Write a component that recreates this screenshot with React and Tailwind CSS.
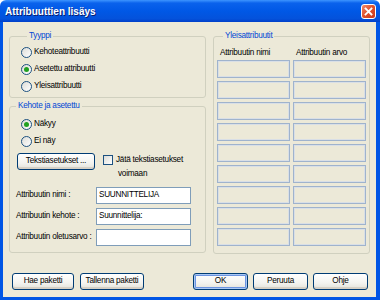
import React from "react";

function Radio({ checked, label }) {
  return (
    <div className="flex items-center gap-[2px] h-[17px]">
      <span className="w-[11px] h-[11px] rounded-full border border-[#1C5180] bg-[linear-gradient(135deg,#DCDCD7,#ffffff)] flex items-center justify-center">
        {checked && <span className="w-[5px] h-[5px] rounded-full bg-[#21A121]" />}
      </span>
      <span>{label}</span>
    </div>
  );
}

function XpButton({ children, className = "", isDefault = false }) {
  return (
    <button
      className={
        "h-[17px] rounded-[3px] border border-[#003C74] bg-[linear-gradient(180deg,#ffffff,#F3F3EF_60%,#E3E2DA)] text-black leading-none whitespace-nowrap " +
        (isDefault ? "shadow-[inset_0_0_0_1px_#A9C8F5,inset_0_0_0_2px_#6C94E0] " : "shadow-[inset_0_-2px_0_#D6D0C5] ") +
        className
      }
    >
      {children}
    </button>
  );
}

function Group({ title, className = "", children }) {
  return (
    <fieldset className={"border border-[#D0D0BF] rounded-[3px] " + className}>
      <legend className="ml-[6px] px-[2px] text-[#0046D5] leading-[10px]">{title}</legend>
      {children}
    </fieldset>
  );
}

function Field({ label, value }) {
  return (
    <div className="flex items-center h-[18px]">
      <span className="w-[86px] pl-[6px] whitespace-nowrap">{label}</span>
      <div className="w-[95px] h-[17px] bg-white border border-[#7F9DB9] flex items-center pl-[2px]">
        {value}
      </div>
    </div>
  );
}

export default function App() {
  const rows = [0, 1, 2, 3, 4, 5, 6, 7, 8];

  return (
    <div className="w-[380px] h-[300px] flex flex-col font-['Liberation_Sans',Arial,sans-serif] text-[8.2px] tracking-[-0.25px] text-black">
      {/* title bar */}
      <div className="h-[22px] rounded-t-[6px] bg-[linear-gradient(180deg,#3D95FF_0%,#0A62EC_14%,#0058E6_50%,#0452DB_85%,#003FC9_100%)] flex items-center justify-between pl-[5px] pr-[4px]">
        <span className="text-white font-bold text-[10px] tracking-normal [text-shadow:1px_1px_0_#0A1E6E]">Attribuuttien lisäys</span>
        <span className="w-[15px] h-[15px] rounded-[3px] border border-white bg-[linear-gradient(135deg,#F08A6C,#E0502A_50%,#C8381A)] flex items-center justify-center">
          <svg width="9" height="9" viewBox="0 0 9 9">
            <path d="M1.5 1.5 L7.5 7.5 M7.5 1.5 L1.5 7.5" stroke="white" strokeWidth="1.8" strokeLinecap="square" />
          </svg>
        </span>
      </div>

      {/* client */}
      <div className="flex-1 bg-[#ECE9D8] border-l-[3px] border-r-[4px] border-b-[3px] border-[#0055E5] flex flex-col">
        <div className="flex gap-[7px] pl-[6px] pt-[9px]">
          <div className="w-[197px] flex flex-col gap-[3px]">
            <Group title="Tyyppi" className="h-[67px] pl-[11px] pt-[3px]">
              <Radio label="Kehoteattribuutti" />
              <Radio checked label="Asetettu attribuutti" />
              <Radio label="Yleisattribuutti" />
            </Group>

            <Group title="Kehote ja asetettu" className="h-[152px] pt-[5px]">
              <div className="pl-[11px]">
                <Radio checked label="Näkyy" />
                <Radio label="Ei näy" />
              </div>
              <div className="flex items-start mt-[3px] h-[31px]">
                <XpButton className="ml-[7px] w-[78px]">Tekstiasetukset ...</XpButton>
                <span className="ml-[8px] mt-[2px] w-[10px] h-[10px] border border-[#1C5180] bg-[linear-gradient(135deg,#DCDCD7,#ffffff)]" />
                <span className="ml-[3px] leading-[14px]">
                  Jätä tekstiasetukset
                  <br />
                  <span className="pl-[2px]">voimaan</span>
                </span>
              </div>
              <div className="flex flex-col gap-[3px] mt-[2px]">
                <Field label="Attribuutin nimi :" value="SUUNNITTELIJA" />
                <Field label="Attribuutin kehote :" value="Suunnittelija:" />
                <Field label="Attribuutin oletusarvo :" value="" />
              </div>
            </Group>
          </div>

          <Group title="Yleisattribuutit" className="w-[157px] h-[223px] px-[3px]">
            <div className="grid grid-cols-2 gap-x-[3px] mt-[7px] mb-[2px]">
              <span className="pl-[3px] leading-[10px]">Attribuutin nimi</span>
              <span className="pl-[3px] leading-[10px]">Attribuutin arvo</span>
            </div>
            <div className="grid grid-cols-2 gap-x-[3px] gap-y-[3px]">
              {rows.map((r) => (
                <React.Fragment key={r}>
                  <div className="h-[18px] border border-[#9FB3CD] shadow-[inset_0_0_0_1px_#D9DFE6]" />
                  <div className="h-[18px] border border-[#9FB3CD] shadow-[inset_0_0_0_1px_#D9DFE6]" />
                </React.Fragment>
              ))}
            </div>
          </Group>
        </div>

        <div className="flex items-center mt-[19px] pl-[9px]">
          <XpButton className="w-[62px]">Hae paketti</XpButton>
          <XpButton className="w-[64px] ml-[6px]">Tallenna paketti</XpButton>
          <XpButton isDefault className="w-[55px] ml-[49px]">OK</XpButton>
          <XpButton className="w-[55px] ml-[5px]">Peruuta</XpButton>
          <XpButton className="w-[55px] ml-[5px]">Ohje</XpButton>
        </div>
      </div>
    </div>
  );
}
